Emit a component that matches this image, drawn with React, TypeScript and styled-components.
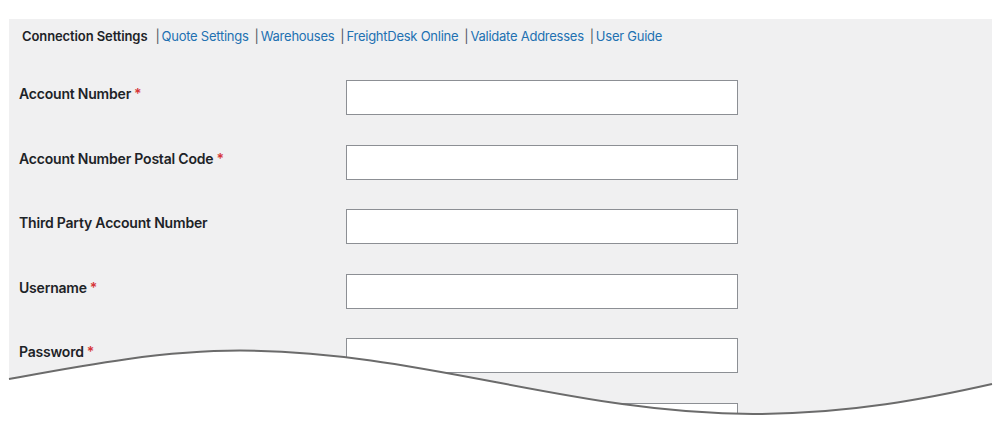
import React from 'react'
import styled, { createGlobalStyle } from 'styled-components'

const GlobalStyle = createGlobalStyle`
  html, body {
    margin: 0;
    padding: 0;
    background: #ffffff;
    overflow: hidden;
    height: 439px;
  }
  body {
    font-family: Inter, "Noto Sans", "Liberation Sans", sans-serif;
    color: #1d2327;
  }
`

type Field = {
  label: string
  required: boolean
  type?: string
}

const tabs = ['Quote Settings', 'Warehouses', 'FreightDesk Online', 'Validate Addresses', 'User Guide']

const fields: Field[] = [
  { label: 'Account Number', required: true },
  { label: 'Account Number Postal Code', required: true },
  { label: 'Third Party Account Number', required: false },
  { label: 'Username', required: true },
  { label: 'Password', required: true, type: 'password' },
  { label: 'Access Key', required: true },
]

function App() {
  return (
    <Page>
      <GlobalStyle />
      <Panel>
        <Tabs>
          <ActiveTab>Connection Settings</ActiveTab>
          {tabs.map((tab) => (
            <TabItem key={tab}>
              <Sep>|</Sep>
              <TabLink href="#">{tab}</TabLink>
            </TabItem>
          ))}
        </Tabs>

        <Form>
          {fields.map((field) => (
            <Row key={field.label}>
              <Label>
                {field.label}
                {field.required ? <Required>*</Required> : null}
              </Label>
              <Input type={field.type ?? 'text'} />
            </Row>
          ))}
        </Form>
      </Panel>

      {/* torn-edge wave over the bottom of the panel */}
      <Wave viewBox="0 0 1000 439" preserveAspectRatio="none">
        <path
          d="M0 379 L9 379 C80 366 160 350.6 240 350.6 C420 350.6 573 414 753 414 C850 414 930 398 992 384 L1000 384 L1000 439 L0 439 Z"
          fill="#ffffff"
        />
        <path
          d="M9 379 C80 366 160 350.6 240 350.6 C420 350.6 573 414 753 414 C850 414 930 398 992 384"
          fill="none"
          stroke="#6b6b6b"
          strokeWidth="2"
        />
      </Wave>
    </Page>
  )
}
export default App

const Page = styled.div`
  position: relative;
  width: 1000px;
  height: 439px;
  overflow: hidden;
  padding-top: 19px;
  box-sizing: border-box;
`

const Panel = styled.div`
  margin-left: 9px;
  width: 983px;
  height: 460px;
  background: #f0f0f1;
  padding: 10px 10px 0;
  box-sizing: border-box;
`

const Tabs = styled.div`
  display: flex;
  align-items: center;
  padding-left: 3px;
  height: 15px;
  font-size: 13px;
  line-height: 15px;
  letter-spacing: -0.25px;
`

const ActiveTab = styled.span`
  font-weight: 600;
  color: #1d2327;
  margin-right: 8px;
  letter-spacing: -0.1px;
`

const TabItem = styled.span`
  display: inline-flex;
  align-items: center;
  margin-right: 6px;
`

const Sep = styled.span`
  color: #50575e;
  margin-right: 2px;
`

const TabLink = styled.a`
  color: #2271b1;
  text-decoration: none;
`

const Form = styled.div`
  display: grid;
  grid-auto-rows: 64.6px;
  margin-top: 36px;
`

const Row = styled.div`
  display: grid;
  grid-template-columns: 327px 392px;
  align-items: start;
`

const Label = styled.label`
  font-size: 14px;
  font-weight: 600;
  line-height: 18px;
  letter-spacing: -0.2px;
  color: #1d2327;
  padding-top: 5px;
`

const Required = styled.span`
  color: #d63638;
  margin-left: 3px;
`

const Input = styled.input`
  width: 392px;
  height: 35px;
  box-sizing: border-box;
  border: 1px solid #8c8f94;
  border-radius: 0;
  background: #ffffff;
  margin: 0;
  padding: 0 8px;
`

const Wave = styled.svg`
  position: absolute;
  left: 0;
  top: 0;
  width: 1000px;
  height: 439px;
  pointer-events: none;
`
